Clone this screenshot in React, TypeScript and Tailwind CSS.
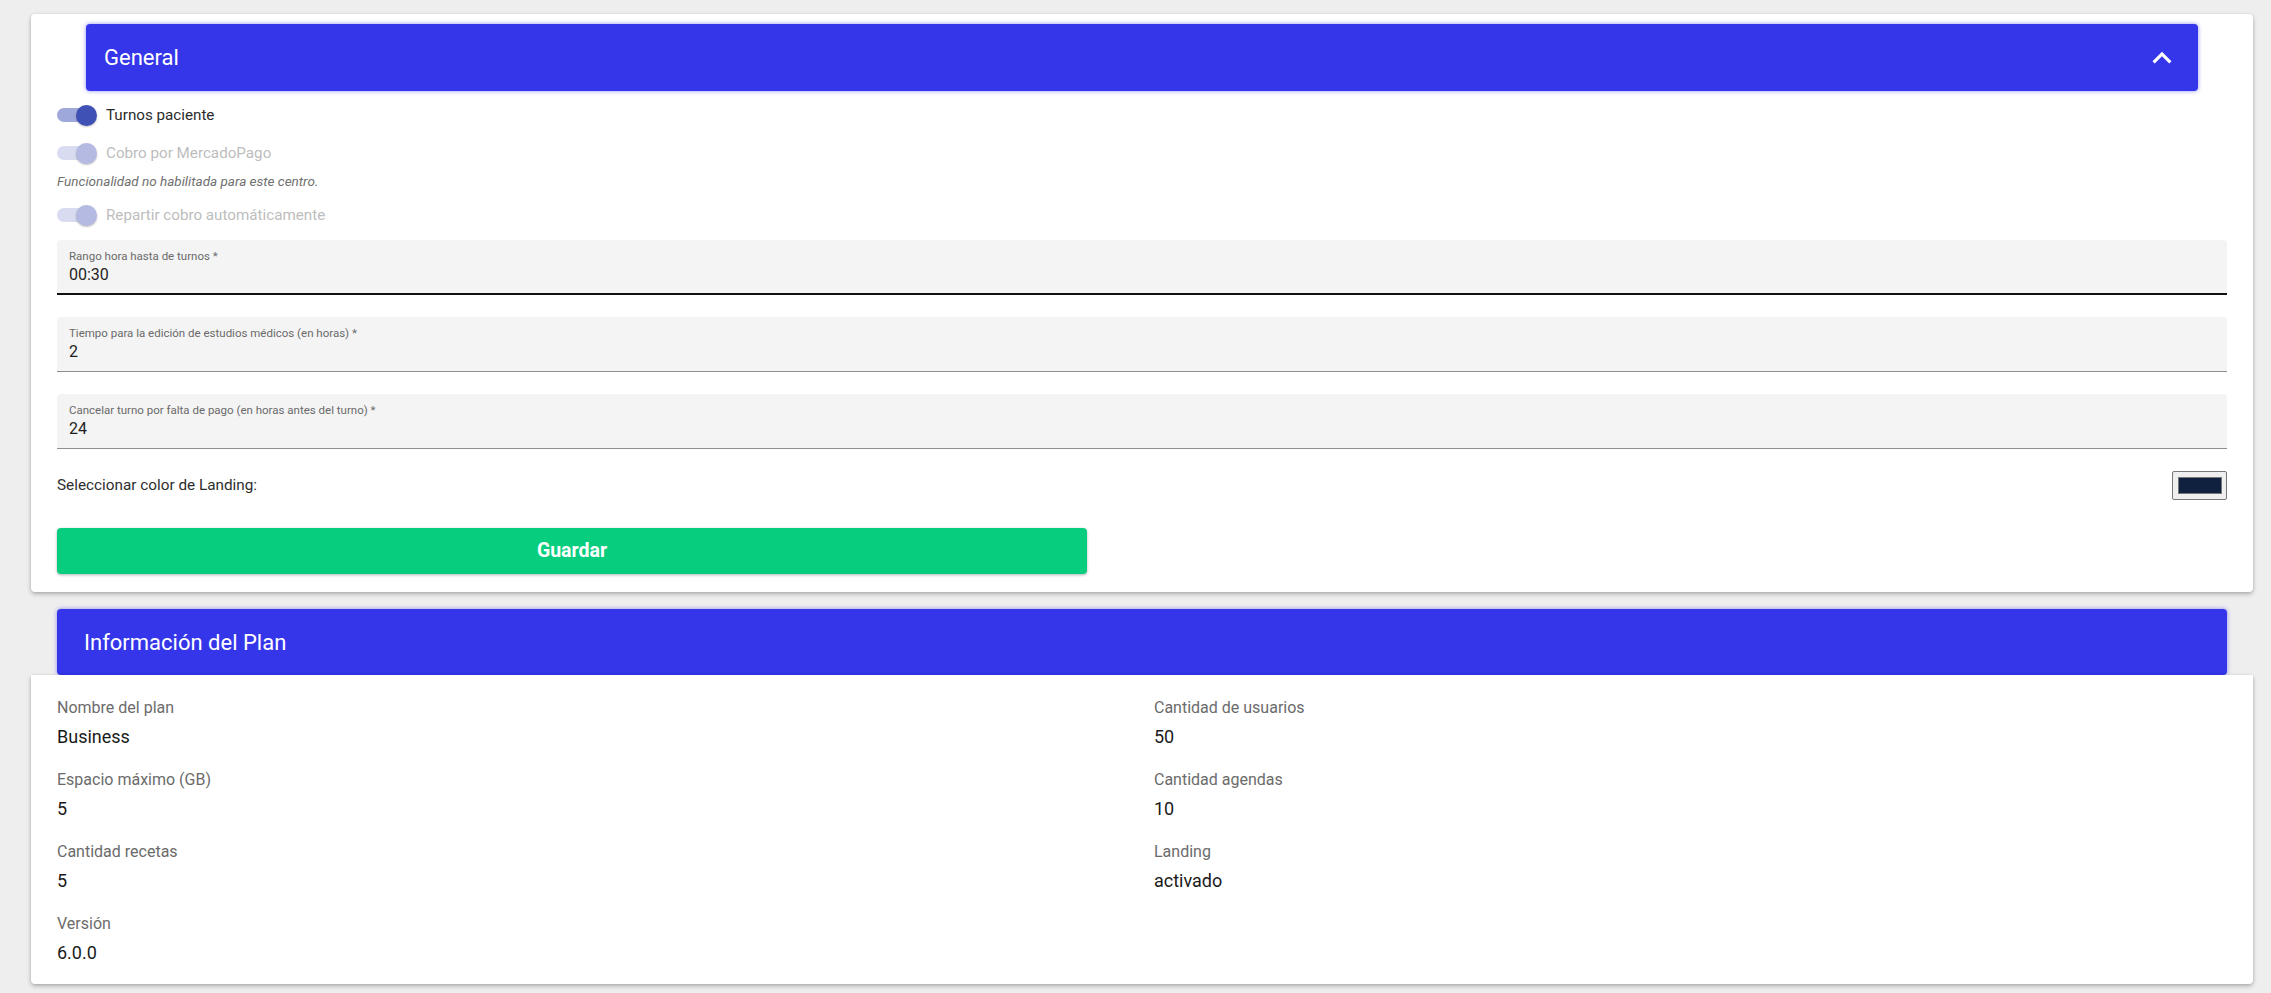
import React from "react";

const FONT = "font-['Roboto','Liberation_Sans',sans-serif]";

const FIELDS = [
  { label: "Rango hora hasta de turnos *", value: "00:30", focused: true },
  { label: "Tiempo para la edición de estudios médicos (en horas) *", value: "2" },
  { label: "Cancelar turno por falta de pago (en horas antes del turno) *", value: "24" },
];

const PLAN_LEFT = [
  { label: "Nombre del plan", value: "Business" },
  { label: "Espacio máximo (GB)", value: "5" },
  { label: "Cantidad recetas", value: "5" },
  { label: "Versión", value: "6.0.0" },
];

const PLAN_RIGHT = [
  { label: "Cantidad de usuarios", value: "50" },
  { label: "Cantidad agendas", value: "10" },
  { label: "Landing", value: "activado" },
];

function Toggle({ label, disabled }: { label: string; disabled?: boolean }) {
  return (
    <div className="flex h-[38px] items-center gap-[9px]">
      <span className="relative block h-[22px] w-[40px]">
        <span
          className={`absolute left-0 top-[4px] h-[14px] w-[36px] rounded-full ${
            disabled ? "bg-[#d9dcf0]" : "bg-[#9fa8da]"
          }`}
        />
        <span
          className={`absolute right-0 top-[0.5px] size-[21px] rounded-full shadow-[0_1px_2px_rgba(0,0,0,0.25)] ${
            disabled ? "bg-[#b4bae2]" : "bg-[#3f51b5]"
          }`}
        />
      </span>
      <span className={`text-[15.2px] ${disabled ? "text-[#bdbdbd]" : "text-[#2b2b2b]"}`}>{label}</span>
    </div>
  );
}

function Field({ label, value, focused }: { label: string; value: string; focused?: boolean }) {
  return (
    <div
      className={`flex h-[55px] flex-col rounded-t-[4px] bg-[#f4f4f4] px-[12px] pt-[7px] ${
        focused ? "border-b-2 border-[#111]" : "border-b border-[#8f8f8f]"
      }`}
    >
      <span className="text-[11.5px] leading-[18px] text-[#6a6a6a]">{label}</span>
      <span className="text-[16px] leading-[20px] text-[#1f1f1f]">{value}</span>
    </div>
  );
}

function SectionHeader({ title, children, className }: { title: string; children?: React.ReactNode; className: string }) {
  return (
    <div
      className={`flex items-center justify-between rounded-[4px] bg-[#3535ea] text-white shadow-[0_0_4px_rgba(53,53,234,0.55)] ${className}`}
    >
      <span className="text-[22px]">{title}</span>
      {children}
    </div>
  );
}

function PlanItem({ label, value }: { label: string; value: string }) {
  return (
    <div className="mb-[21px] flex flex-col last:mb-0">
      <span className="text-[16px] leading-[20px] text-[#6b6b6b]">{label}</span>
      <span className="mt-[7px] text-[18px] leading-[24px] text-[#1a1a1a]">{value}</span>
    </div>
  );
}

export default function App() {
  return (
    <div className={`${FONT} min-h-screen bg-[#eeeeee] pb-[10px] pl-[31px] pr-[18px] pt-[14px]`}>
      {/* general settings card */}
      <section className="rounded-[4px] bg-white pb-[18px] pt-[10px] shadow-[0_2px_4px_rgba(0,0,0,0.28),0_0_2px_rgba(0,0,0,0.08)]">
        <SectionHeader title="General" className="mx-[55px] h-[67px] pl-[18px] pr-[17px]">
          <svg viewBox="0 0 24 24" className="size-[38px]" fill="currentColor">
            <path d="M12 8l-6 6 1.41 1.41L12 10.83l4.59 4.58L18 14z" />
          </svg>
        </SectionHeader>

        <div className="px-[26px] pt-[5px]">
          <Toggle label="Turnos paciente" />
          <Toggle label="Cobro por MercadoPago" disabled />
          <p className="h-[18px] text-[13.5px] italic leading-[18px] text-[#6f6f6f]">
            Funcionalidad no habilitada para este centro.
          </p>
          <div className="mt-[6px]">
            <Toggle label="Repartir cobro automáticamente" disabled />
          </div>

          <div className="mt-[6px] flex flex-col gap-[22px]">
            {FIELDS.map((f) => (
              <Field key={f.label} {...f} />
            ))}
          </div>

          <div className="mt-[22px] flex h-[29px] items-center justify-between">
            <span className="text-[15.3px] text-[#2e2e2e]">Seleccionar color de Landing:</span>
            <span className="flex h-[29px] w-[55px] items-center justify-center rounded-[2px] border border-[#777] bg-[#efefef]">
              <span className="h-[17px] w-[44px] border border-[#777] bg-[#10213f]" />
            </span>
          </div>

          <button className="mt-[28px] h-[46px] w-[1030px] rounded-[4px] bg-[#07ce7e] text-[19.5px] font-bold text-white shadow-[0_1px_3px_rgba(0,0,0,0.3)]">
            Guardar
          </button>
        </div>
      </section>

      {/* plan info */}
      <SectionHeader title="Información del Plan" className="mx-[26px] mt-[17px] h-[66px] px-[27px]" />
      <section className="rounded-b-[4px] bg-white px-[26px] pb-[19px] pt-[23px] shadow-[0_2px_4px_rgba(0,0,0,0.28),0_0_2px_rgba(0,0,0,0.08)]">
        <div className="grid grid-cols-2 gap-x-6">
          <div>
            {PLAN_LEFT.map((p) => (
              <PlanItem key={p.label} {...p} />
            ))}
          </div>
          <div>
            {PLAN_RIGHT.map((p) => (
              <PlanItem key={p.label} {...p} />
            ))}
          </div>
        </div>
      </section>
    </div>
  );
}
